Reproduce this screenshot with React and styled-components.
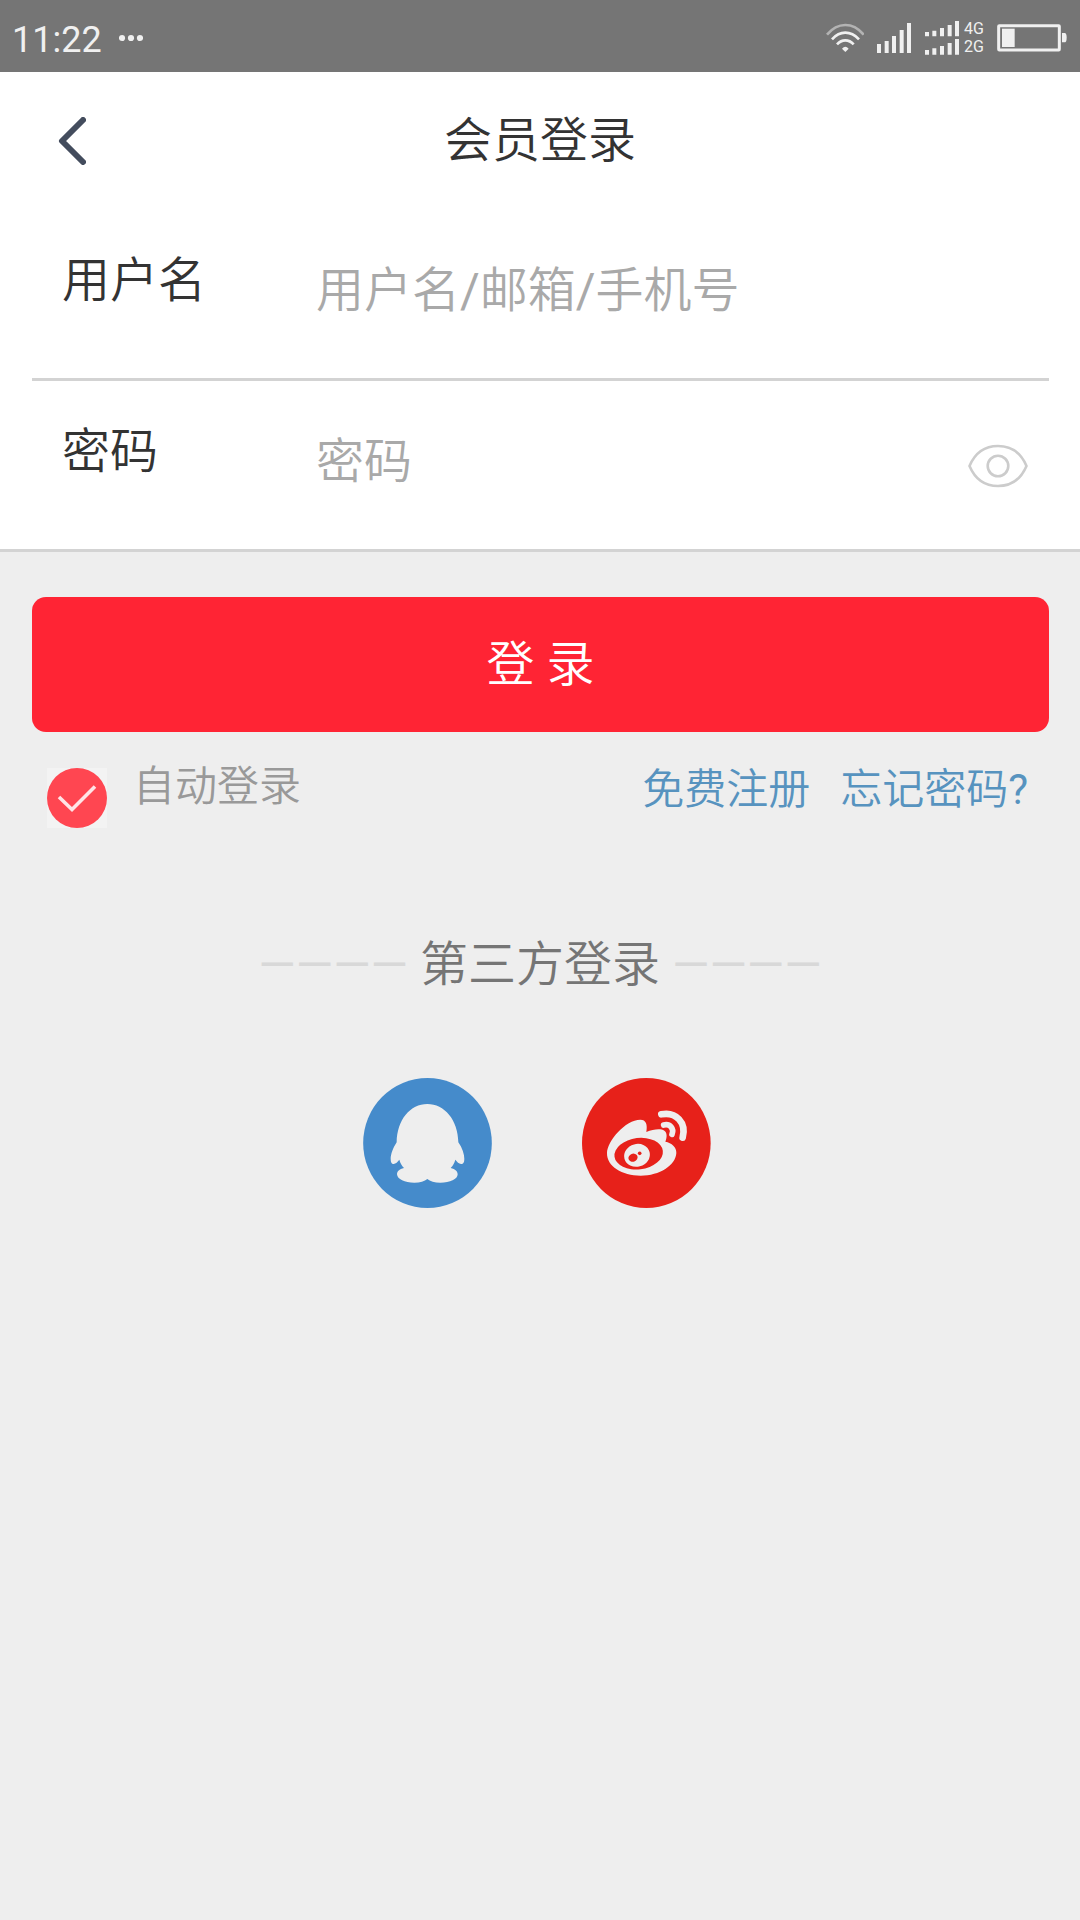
import React, { useState } from "react"
import styled, { createGlobalStyle } from "styled-components"

const GlobalStyle = createGlobalStyle`
    *, *::before, *::after{
        box-sizing: border-box;
    }
    body{
        margin: 0;
        background: #eeeeee;
        font-family: Roboto, "Noto Sans CJK SC DemiLight", "Noto Sans CJK SC", sans-serif;
        font-size: 48px;
        line-height: 48px;
        color: #333333;
    }
    button, input{
        font: inherit;
        color: inherit;
        border: none;
        padding: 0;
        margin: 0;
        background: none;
    }
    svg{
        display: block;
        flex: none;
    }
    `

const StatusBar = styled.div`
    display: flex;
    align-items: center;
    justify-content: space-between;
    height: 72px;
    padding: 0 13px 0 12px;
    background: #757575;
    color: #f0f0f0;
    font-size: 36px;
    line-height: 36px;
    `
const StatusGroup = styled.div`
    display: flex;
    align-items: center;
    gap: ${props => props.$gap};
    padding-top: 4px;
    `
const Time = styled.span`
    padding-top: 3px;
    `
const Network = styled.div`
    display: flex;
    align-items: center;
    gap: 5px;
    `
const NetworkTypes = styled.div`
    display: flex;
    flex-direction: column;
    font-size: 16px;
    line-height: 18px;
    `

const Header = styled.header`
    display: grid;
    grid-template-columns: 120px 1fr 120px;
    align-items: center;
    height: 138px;
    background: #ffffff;
    `
const BackButton = styled.button`
    display: flex;
    height: 96px;
    align-items: center;
    padding-left: 58px;
    cursor: pointer;
    `
const Title = styled.h1`
    margin: 0;
    font-size: 48px;
    font-weight: 400;
    text-align: center;
    `

const Fields = styled.div`
    background: #ffffff;
    border-bottom: 3px solid #d3d3d3;
    `
const Field = styled.div`
    display: flex;
    align-items: flex-start;
    height: ${props => (props.$divided ? "171px" : "168px")};
    margin: 0 31px 0 32px;
    padding: 47px 21px 0 30px;
    border-bottom: ${props => (props.$divided ? "3px solid #d3d3d3" : "none")};
    `
const FieldLabel = styled.label`
    flex: none;
    width: 254px;
    `
const FieldInput = styled.input`
    flex: 1;
    min-width: 0;
    height: 48px;
    margin-top: 9px;
    outline: none;
    &::placeholder{
        color: #a9a9a9;
        opacity: 1;
    }
    `
const EyeButton = styled.button`
    margin-top: 16px;
    cursor: pointer;
    `

const Actions = styled.div`
    padding: 45px 31px 0 32px;
    `
const SubmitButton = styled.button`
    display: block;
    width: 100%;
    height: 135px;
    border-radius: 14px;
    background: #ff2434;
    color: #ffffff;
    cursor: pointer;
    `
const Options = styled.div`
    display: flex;
    justify-content: space-between;
    align-items: flex-start;
    padding: 34px 21px 0 15px;
    font-size: 42px;
    line-height: 42px;
    `
const AutoLogin = styled.label`
    display: flex;
    align-items: flex-start;
    gap: 26px;
    color: #999999;
    cursor: pointer;
    `
const CheckWrap = styled.span`
    display: grid;
    margin-top: 2px;
    background: #f3f3f3;
    & > *{
        grid-area: 1 / 1;
        width: 60px;
        height: 60px;
    }
    `
const CheckInput = styled.input`
    opacity: 0;
    `
const Links = styled.nav`
    display: flex;
    gap: 30px;
    padding-top: 3px;
    `
const Link = styled.a`
    color: #5793bf;
    text-decoration: none;
    `

const ThirdParty = styled.section`
    display: flex;
    flex-direction: column;
    align-items: center;
    padding-top: 113px;
    `
const ThirdTitle = styled.h2`
    margin: 0;
    font-size: 48px;
    font-weight: 400;
    color: #757575;
    `
const Dashes = styled.span`
    color: #d8d8d8;
    `
const Logos = styled.div`
    display: flex;
    gap: 90px;
    padding: 89px 6px 0 0;
    `
const LogoButton = styled.button`
    border-radius: 50%;
    cursor: pointer;
    `

function Dots(){
    return (
        <svg width="24" height="8" viewBox="0 0 24 8" fill="#f0f0f0">
            <circle cx="3" cy="4" r="3.1" />
            <circle cx="12" cy="4" r="3.1" />
            <circle cx="21" cy="4" r="3.1" />
        </svg>
    )
}

function Wifi(){
    return (
        <svg width="38" height="30" viewBox="80 66 114 90" fill="none" stroke="#f0f0f0" strokeWidth="8">
            <path d="M83 101Q107 72 138 72T193 101" stroke="#b3b3b3" />
            <path d="M98 115Q116 95 138 95T179 115" />
            <path d="M113 130Q124 118 138 118T163 130" />
            <path d="M128 143Q138 132 148 143L138 153Z" fill="#f0f0f0" stroke="none" />
        </svg>
    )
}

function Signal(){
    return (
        <svg width="35" height="30" viewBox="231 66 105 90" fill="#f0f0f0">
            <path d="M231 129h12v27h-12zM254 120h12v36h-12zM276 105h12v51h-12zM299 87h12v69h-12zM321 66h12v90h-12z" />
        </svg>
    )
}

function DualSignal(){
    return (
        <svg width="34" height="34" viewBox="375 60 102 102" fill="#f0f0f0">
            <path d="M375 93h12v13h-12zM397 89h12v17h-12zM420 81h12v25h-12zM443 72h12v34h-12zM465 60h12v46h-12z" />
            <path d="M375 147h12v14h-12zM397 142h12v19h-12zM420 135h12v26h-12zM443 126h12v35h-12zM465 114h12v47h-12z" />
        </svg>
    )
}

function Battery(){
    return (
        <svg width="70" height="28" viewBox="591 71 210 84" fill="#f0f0f0">
            <rect x="596" y="76" width="182" height="73" rx="2" fill="none" stroke="#f0f0f0" strokeWidth="9" />
            <rect x="606" y="85" width="38" height="55" />
            <path d="M786 98h9q5 2 5 14t-5 14h-9z" />
        </svg>
    )
}

function Chevron(){
    return (
        <svg width="28" height="48" viewBox="0 0 28 48" fill="none" stroke="#434c5d" strokeWidth="6" strokeLinecap="round" strokeLinejoin="round">
            <path d="M25 3L4 24L25 45" />
        </svg>
    )
}

function Eye(){
    return (
        <svg width="60" height="44" viewBox="0 0 60 44" fill="none" stroke="#cccccc" strokeWidth="2.6">
            <path d="M1.5 22C7 9 17 2 30 2S53 9 58.5 22C53 35 43 42 30 42S7 35 1.5 22Z" strokeLinejoin="round" />
            <circle cx="30" cy="22" r="10.3" />
        </svg>
    )
}

function CheckMark({ checked }){
    return (
        <svg viewBox="0 0 60 60" fill="none">
            <circle cx="30" cy="30" r="30" fill={checked ? "#ff4651" : "#d3d3d3"} />
            {checked && <path d="M12 29L25 41.5L48 18.5" stroke="#ffe4e6" strokeWidth="3.6" />}
        </svg>
    )
}

function QQLogo(){
    return (
        <svg width="129" height="130" viewBox="39 39 387 390">
            <ellipse cx="232.5" cy="234" rx="193" ry="195" fill="#458bcb" />
            <path
                fill="#eeeeee"
                d="M232 117C181 117 141 164 140 232C129 249 122 268 122 282C122 293 126 298 131 297C137 296 143 291 148 284C151 294 155 302 162 309C148 312 141 319 141 328C142 343 164 353 193 353C210 353 224 349 232 342C240 349 254 353 271 353C300 353 323 343 323 328C323 319 316 312 302 309C309 302 313 294 316 284C321 291 327 296 333 297C339 298 343 293 343 282C343 268 337 249 325 232C324 164 283 117 232 117Z"
            />
        </svg>
    )
}

function WeiboLogo(){
    return (
        <svg width="129" height="130" viewBox="36 39 387 390">
            <ellipse cx="229" cy="234" rx="193" ry="195" fill="#e7211a" />
            <path
                fill="#eeeeee"
                d="M111 264C112 228 166 164 211 164C228 164 233 178 229 201C251 192 272 190 283 197C291 203 292 215 286 230C305 234 320 246 319 264C317 301 269 332 212 332C156 332 110 304 111 264Z"
            />
            <ellipse cx="206" cy="266" rx="73" ry="47" transform="rotate(-7 206 266)" fill="#e7211a" />
            <ellipse cx="201" cy="271" rx="39" ry="34" transform="rotate(-15 201 271)" fill="#eeeeee" />
            <ellipse cx="189" cy="278" rx="14" ry="12" transform="rotate(-20 189 278)" fill="#e7211a" />
            <circle cx="209" cy="265" r="5.5" fill="#e7211a" />
            <g fill="none" stroke="#eeeeee" strokeLinecap="round">
                <path d="M274 148C318 139 350 173 338 218" strokeWidth="20" />
                <path d="M281 180C300 175 313 191 306 208" strokeWidth="17" />
            </g>
        </svg>
    )
}

function App(){
    const [autoLogin, setAutoLogin] = useState(true)
    const [showPassword, setShowPassword] = useState(false)

    return (
        <>
            <GlobalStyle />
            <StatusBar>
                <StatusGroup $gap="17px">
                    <Time>11:22</Time>
                    <Dots />
                </StatusGroup>
                <StatusGroup $gap="13px">
                    <Wifi />
                    <Signal />
                    <Network>
                        <DualSignal />
                        <NetworkTypes>
                            <span>4G</span>
                            <span>2G</span>
                        </NetworkTypes>
                    </Network>
                    <Battery />
                </StatusGroup>
            </StatusBar>
            <Header>
                <BackButton type="button" aria-label="返回">
                    <Chevron />
                </BackButton>
                <Title>会员登录</Title>
            </Header>
            <form onSubmit={e => e.preventDefault()}>
                <Fields>
                    <Field $divided>
                        <FieldLabel htmlFor="username">用户名</FieldLabel>
                        <FieldInput id="username" type="text" placeholder="用户名/邮箱/手机号" />
                    </Field>
                    <Field>
                        <FieldLabel htmlFor="password">密码</FieldLabel>
                        <FieldInput id="password" type={showPassword ? "text" : "password"} placeholder="密码" />
                        <EyeButton type="button" aria-label="显示密码" onClick={() => setShowPassword(!showPassword)}>
                            <Eye />
                        </EyeButton>
                    </Field>
                </Fields>
                <Actions>
                    <SubmitButton type="submit">登 录</SubmitButton>
                    <Options>
                        <AutoLogin>
                            <CheckWrap>
                                <CheckMark checked={autoLogin} />
                                <CheckInput type="checkbox" checked={autoLogin} onChange={e => setAutoLogin(e.target.checked)} />
                            </CheckWrap>
                            自动登录
                        </AutoLogin>
                        <Links>
                            <Link href="#register">免费注册</Link>
                            <Link href="#forgot">忘记密码?</Link>
                        </Links>
                    </Options>
                </Actions>
            </form>
            <ThirdParty>
                <ThirdTitle>
                    <Dashes>————</Dashes> 第三方登录 <Dashes>————</Dashes>
                </ThirdTitle>
                <Logos>
                    <LogoButton type="button" aria-label="QQ登录">
                        <QQLogo />
                    </LogoButton>
                    <LogoButton type="button" aria-label="微博登录">
                        <WeiboLogo />
                    </LogoButton>
                </Logos>
            </ThirdParty>
        </>
    )
}

export default App
